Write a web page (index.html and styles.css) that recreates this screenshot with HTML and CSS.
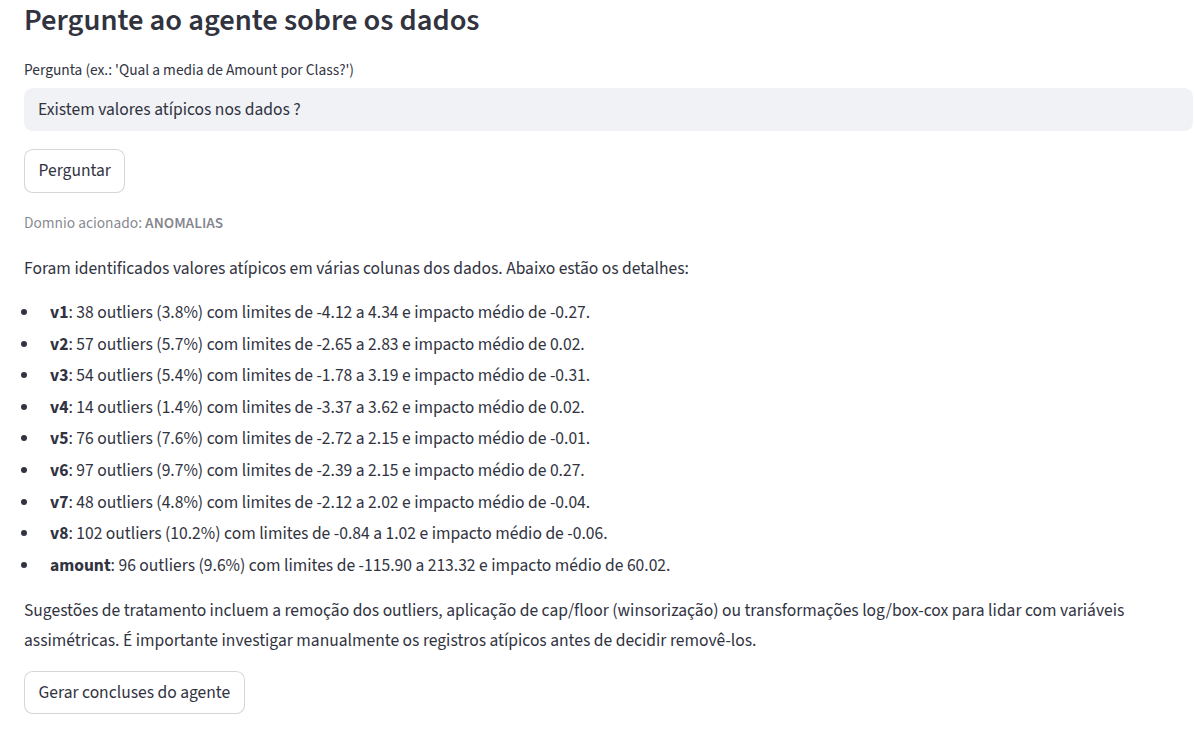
FILE: index.html
```html
<!DOCTYPE html>
<html lang="pt">
<head>
<meta charset="utf-8">
<title>Pergunte ao agente sobre os dados</title>
<link rel="stylesheet" href="styles.css">
</head>
<body>
<main class="page">
  <h3 class="title">Pergunte ao agente sobre os dados</h3>

  <label class="field-label" for="q">Pergunta (ex.: 'Qual a media de Amount por Class?')</label>
  <div class="input" id="q">Existem valores atípicos nos dados ?</div>

  <div class="btn-row first-btn"><button class="btn">Perguntar</button></div>

  <div class="caption">Domnio acionado: <strong>ANOMALIAS</strong></div>

  <div class="markdown">
    <p class="intro">Foram identificados valores atípicos em várias colunas dos dados. Abaixo estão os detalhes:</p>
    <ul class="list">
      <li><strong>v1</strong>: 38 outliers (3.8%) com limites de -4.12 a 4.34 e impacto médio de -0.27.</li>
      <li><strong>v2</strong>: 57 outliers (5.7%) com limites de -2.65 a 2.83 e impacto médio de 0.02.</li>
      <li><strong>v3</strong>: 54 outliers (5.4%) com limites de -1.78 a 3.19 e impacto médio de -0.31.</li>
      <li><strong>v4</strong>: 14 outliers (1.4%) com limites de -3.37 a 3.62 e impacto médio de 0.02.</li>
      <li><strong>v5</strong>: 76 outliers (7.6%) com limites de -2.72 a 2.15 e impacto médio de -0.01.</li>
      <li><strong>v6</strong>: 97 outliers (9.7%) com limites de -2.39 a 2.15 e impacto médio de 0.27.</li>
      <li><strong>v7</strong>: 48 outliers (4.8%) com limites de -2.12 a 2.02 e impacto médio de -0.04.</li>
      <li><strong>v8</strong>: 102 outliers (10.2%) com limites de -0.84 a 1.02 e impacto médio de -0.06.</li>
      <li><strong>amount</strong>: 96 outliers (9.6%) com limites de -115.90 a 213.32 e impacto médio de 60.02.</li>
    </ul>
    <p class="outro">Sugestões de tratamento incluem a remoção dos outliers, aplicação de cap/floor (winsorização) ou transformações log/box-cox para lidar com variáveis assimétricas. É importante investigar manualmente os registros atípicos antes de decidir removê-los.</p>
  </div>

  <div class="btn-row last-btn"><button class="btn">Gerar concluses do agente</button></div>
</main>
</body>
</html>
```
FILE: styles.css
```css
html, body {
  margin: 0;
  padding: 0;
  background: #ffffff;
}

body {
  font-family: "Source Sans 3", "Lato", "Liberation Sans", sans-serif;
  color: #31333f;
  font-size: 17.5px;
  line-height: 1.6;
}

.page {
  display: flex;
  flex-direction: column;
  padding: 0 1px 0 24px;
}

.title {
  margin: 0;
  font-size: 30.5px;
  font-weight: 600;
  line-height: 41px;
  height: 41px;
  color: #31333f;
}

.field-label {
  margin-top: 17.5px;
  font-size: 15.4px;
  line-height: 22px;
  color: #31333f;
}

.input {
  margin-top: 7px;
  height: 43px;
  box-sizing: border-box;
  background: #f0f2f6;
  border-radius: 8.8px;
  padding: 2px 14px 0;
  display: flex;
  align-items: center;
  font-size: 17.5px;
}

.btn-row {
  display: flex;
}

.first-btn {
  margin-top: 18px;
}

.btn {
  font-family: inherit;
  font-size: 17.5px;
  color: #31333f;
  background: #ffffff;
  border: 1px solid rgba(49, 51, 63, 0.2);
  border-radius: 8.8px;
  height: 44px;
  padding: 1px 13.5px 0;
  line-height: 1.6;
  cursor: pointer;
}

.caption {
  margin-top: 19.5px;
  font-size: 15.4px;
  line-height: 22px;
  color: rgba(49, 51, 63, 0.6);
}

.caption strong {
  font-weight: 600;
}

.markdown {
  margin-top: 20.5px;
  line-height: 28px;
}

.markdown p {
  margin: 0;
}

.list {
  margin: 16.5px 0 0 0;
  padding: 0 0 0 15.5px;
}

.list li {
  padding-left: 10.5px;
  margin-bottom: 3.6px;
}

.list li:last-child {
  margin-bottom: 0;
}

.list strong {
  font-weight: 700;
}

.markdown .outro {
  margin-top: 16.5px;
  line-height: 29.5px;
}

.last-btn {
  margin-top: 16px;
}

.last-btn .btn {
  height: 43px;
}
```
